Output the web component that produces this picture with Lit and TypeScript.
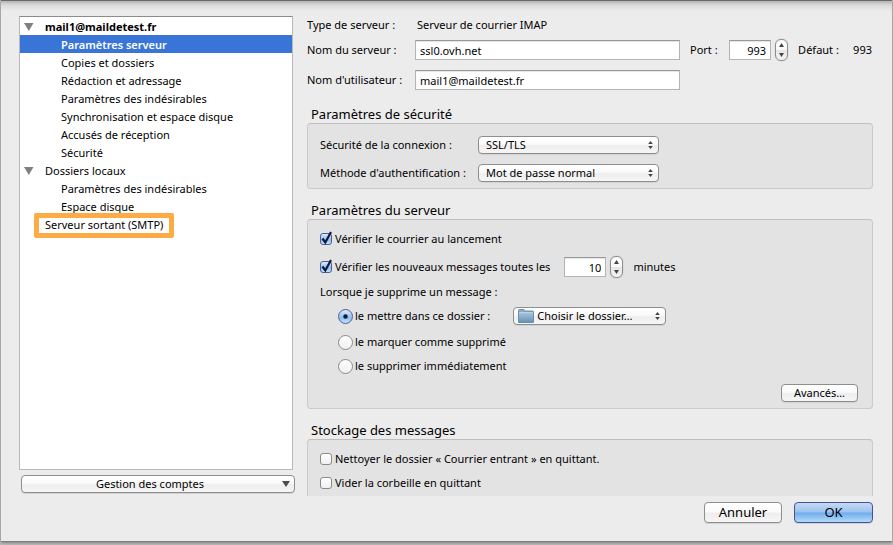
import { LitElement, html, css, nothing } from "lit";
import { customElement, property, state } from "lit/decorators.js";
import { classMap } from "lit/directives/class-map.js";

const controls = css`
  *, *::before, *::after { box-sizing: border-box; }
  button, input, select { font: inherit; color: inherit; margin: 0; }
  .push, .popup select {
    height: 18px;
    padding: 0 8px;
    border: 1px solid #8e8e8e;
    border-radius: 4px;
    background: linear-gradient(#ffffff, #fafafa 45%, #eeeeee 55%, #f6f6f6);
    box-shadow: 0 1px 0 #d2d2d2;
    line-height: 16px;
    white-space: nowrap;
  }
  .field {
    width: 100%;
    height: 20px;
    padding: 0 4px;
    border: 1px solid #b4b4b4;
    border-top-color: #989898;
    border-radius: 0;
    background: #fff;
    box-shadow: inset 0 1px 1px #e4e4e4;
    outline: none;
  }
`;

@customElement("pop-up")
class PopUp extends LitElement {
  @property({ type: Array }) options: string[] = [];
  @property() label = "";
  @property({ type: Boolean }) folder = false;

  static styles = [controls, css`
    :host { display: block; }
    .popup { display: grid; align-items: center; }
    .popup select {
      grid-area: 1 / 1;
      width: 100%;
      padding: 0 18px 0 7px;
      appearance: none;
      outline: none;
    }
    .popup.folder select { padding-left: 23px; }
    .arrows { grid-area: 1 / 1; justify-self: end; margin-right: 6px; pointer-events: none; }
    .icon { grid-area: 1 / 1; justify-self: start; margin-left: 5px; pointer-events: none; }
  `];

  render() {
    return html`
      <div class=${classMap({ popup: true, folder: this.folder })}>
        <select aria-label=${this.label}>
          ${this.options.map((o) => html`<option>${o}</option>`)}
        </select>
        ${this.folder ? html`
          <svg class="icon" width="16" height="14" viewBox="0 0 16 14" aria-hidden="true">
            <defs><linearGradient id="f" x1="0" y1="0" x2="0" y2="1">
              <stop offset="0" stop-color="#a3c3da"></stop><stop offset="1" stop-color="#6894b4"></stop>
            </linearGradient></defs>
            <path d="M.5 13.500V1.500Q.5.5 1.500.5H5.500Q6.500.5 6.500 1.500V2H14.500Q15.500 2 15.500 3V13.500Z" fill="#86abc6" stroke="#6a90ac"></path>
            <path d="M1 4H15V13H1Z" fill="url(#f)"></path>
            <path d="M1 3.500H15" stroke="#b9d3e5"></path>
          </svg>` : nothing}
        <svg class="arrows" width="5" height="8" viewBox="0 0 5 8" aria-hidden="true">
          <path d="M2.500 0 4.800 3H.2ZM2.500 8 .2 5H4.800Z" fill="#444"></path>
        </svg>
      </div>`;
  }
}

@customElement("number-stepper")
class NumberStepper extends LitElement {
  @property({ type: Number }) value = 0;
  @property() label = "";

  static styles = [controls, css`
    :host { display: flex; align-items: center; gap: 4px; }
    .field { width: 42px; text-align: right; }
    .stepper {
      display: flex;
      flex-direction: column;
      width: 13px;
      height: 22px;
      border: 1px solid #8e8e8e;
      border-radius: 6px;
      background: linear-gradient(#fff, #f8f8f8 48%, #e6e6e6 52%, #f4f4f4);
      box-shadow: 0 0 1px #999;
    }
    .step { flex: 1; display: grid; place-items: center; padding: 0; border: 0; background: none; }
    .step svg { display: block; }
  `];

  render() {
    return html`
      <input class="field" inputmode="numeric" aria-label=${this.label} .value=${String(this.value)}>
      <span class="stepper">
        <button class="step" aria-label="Augmenter" @click=${() => this.value++}>
          <svg width="5" height="4" viewBox="0 0 5 4"><path d="M2.500 0 5 4H0Z" fill="#444"></path></svg>
        </button>
        <button class="step" aria-label="Diminuer" @click=${() => this.value--}>
          <svg width="5" height="4" viewBox="0 0 5 4"><path d="M0 0H5L2.500 4Z" fill="#444"></path></svg>
        </button>
      </span>`;
  }
}

interface Entry { text: string; kind: "account" | "child" | "root"; bold?: boolean; marked?: boolean; }

const ENTRIES: Entry[] = [
  { text: "mail1@maildetest.fr", kind: "account", bold: true },
  { text: "Paramètres serveur", kind: "child" },
  { text: "Copies et dossiers", kind: "child" },
  { text: "Rédaction et adressage", kind: "child" },
  { text: "Paramètres des indésirables", kind: "child" },
  { text: "Synchronisation et espace disque", kind: "child" },
  { text: "Accusés de réception", kind: "child" },
  { text: "Sécurité", kind: "child" },
  { text: "Dossiers locaux", kind: "account" },
  { text: "Paramètres des indésirables", kind: "child" },
  { text: "Espace disque", kind: "child" },
  { text: "Serveur sortant (SMTP)", kind: "root", marked: true },
];

@customElement("app-root")
class AppRoot extends LitElement {
  @state() private selected = 1;

  static styles = [controls, css`
    :host {
      display: block;
      height: 100vh;
      min-height: 400px;
      padding: 0 1px 3px;
      background: #bdbdbd;
      color: #000;
      font: 11px/18px "Noto Sans", "Open Sans", sans-serif;
      box-sizing: border-box;
      overflow: hidden;
    }
    .sheet {
      display: flex;
      flex-direction: column;
      height: 100%;
      padding: 15px 19px 18px 18px;
      border-top: 1px solid #6a666a;
      border-bottom: 1px solid #7c7c7c;
      background: linear-gradient(#b4b2b4, #dadada 4px, #ececec 10px);
      box-shadow: 0 1px 3px #808080;
    }
    .columns {
      flex: 1;
      min-height: 0;
      display: grid;
      grid-template-columns: 274px minmax(0, 1fr);
      gap: 14px;
    }
    .side { display: flex; flex-direction: column; min-height: 0; padding-bottom: 3px; }
    .tree {
      flex: 1;
      margin: 0 0 5px;
      padding: 0;
      list-style: none;
      border: 1px solid #b8b8b8;
      border-top-color: #8c8c8c;
      background: #fff;
    }
    .entry {
      display: flex;
      align-items: center;
      width: 100%;
      height: 18px;
      padding: 2px 0 0 25px;
      border: 0;
      background: none;
      text-align: left;
      white-space: nowrap;
    }
    .entry.child { padding-left: 41px; }
    .entry.account { padding-left: 4px; gap: 11px; }
    .entry.bold { font-weight: 700; }
    .entry.selected { background: #3875d7; color: #fff; font-weight: 600; }
    .marked .name { position: relative; }
    .marked .name::after {
      content: "";
      position: absolute;
      inset: -3px -11px -4px;
      border: 5px solid #ffab45;
      border-radius: 2px;
    }
    .manage { display: flex; align-items: center; margin: 0 -2px 0 2px; }
    .manage span { flex: 1; padding-right: 12px; text-align: center; }
    .manage svg { margin-right: -4px; }

    .panel { min-height: 0; overflow: hidden; }
    .server {
      display: grid;
      grid-template-columns: 108px minmax(0, 1fr) 193px;
      align-items: center;
      margin-bottom: 5px;
    }
    .server > * { margin-bottom: 10px; }
    .server > .type { margin-bottom: 6px; }
    .type.value { grid-column: 2 / 4; padding-left: 2px; }
    .port { display: flex; align-items: center; height: 20px; padding: 0 1px 0 10px; }
    .port .caption { flex: 1; }
    .port .default { width: 55px; margin-left: 10px; }
    .group { margin: 0 0 12px; }
    .title { margin: 0; padding: 0 4px; font-size: 13px; line-height: 18px; font-weight: 400; }
    .box {
      padding: 10px 14px 6px 12px;
      border: 1px solid #cacaca;
      border-top-color: #bebebe;
      border-radius: 4px;
      background: #e3e3e3;
    }
    .security {
      display: grid;
      grid-template-columns: 152px 181px;
      gap: 10px 6px;
      padding-top: 12px;
      white-space: nowrap;
    }
    .stack { display: flex; flex-direction: column; gap: 6px; }
    .line { display: flex; align-items: center; height: 18px; white-space: nowrap; }
    .later { height: 20px; margin-top: 3px; }
    .indent { padding-left: 18px; }
    .spaced { margin-top: 2px; }
    .option { display: flex; align-items: center; gap: 3px; }
    .option.radio { gap: 2px; }
    .tick { display: grid; place-items: center; }
    .tick > * { grid-area: 1 / 1; }
    .tick svg { pointer-events: none; display: none; overflow: visible; }
    .tick input:checked + svg { display: block; }
    .tick input {
      appearance: none;
      width: 12px;
      height: 12px;
      border: 1px solid #8a8a8a;
      border-radius: 3px;
      background: linear-gradient(#fff, #f0f0f0);
    }
    .tick input:checked { border-color: #4a5f96; background: linear-gradient(#dcebfa, #8fbdf0 60%, #c2e6fc); }
    .tick input[type="radio"] { width: 15px; height: 15px; border-radius: 50%; }
    .after { margin-left: 10px; }
    .every { margin-left: 14px; }
    .folder { width: 153px; margin-left: 23px; }
    .end { justify-content: flex-end; margin-top: 3px; }
    .advanced { width: 77px; text-align: center; }
    .actions { display: flex; justify-content: flex-end; gap: 12px; padding-top: 6px; font-size: 13px; }
    .actions .push { width: 78px; height: 21px; line-height: 19px; }
    .actions .ok {
      width: 79px;
      border-color: #4a4f98;
      background: linear-gradient(#c4daf4, #9cc2f0 48%, #70abec 52%, #b0dcf8);
    }
  `];

  private check(label: string, checked: boolean) {
    return html`
      <label class="option">
        <span class="tick">
          <input type="checkbox" .checked=${checked}>
          <svg width="12" height="12" viewBox="0 0 12 12" aria-hidden="true">
            <path d="M2.500 5.500 5.300 9.500 11 -1" fill="none" stroke="#10183c" stroke-width="2.200"></path>
          </svg>
        </span>
        <span>${label}</span>
      </label>`;
  }

  private radio(label: string, checked: boolean) {
    return html`
      <label class="option radio">
        <span class="tick">
          <input type="radio" name="delete" .checked=${checked}>
          <svg width="5" height="5" viewBox="0 0 5 5" aria-hidden="true">
            <circle cx="2.500" cy="2.500" r="2.200" fill="#10183c"></circle>
          </svg>
        </span>
        <span>${label}</span>
      </label>`;
  }

  private entry(e: Entry, i: number) {
    const classes = { entry: true, [e.kind]: true, bold: !!e.bold, marked: !!e.marked, selected: i === this.selected };
    return html`
      <li>
        <button class=${classMap(classes)} @click=${() => (this.selected = i)}>
          ${e.kind === "account" ? html`
            <svg width="10" height="8" viewBox="0 0 10 8" aria-hidden="true"><path d="M0 0H9.500L4.800 8Z" fill="#808080"></path></svg>` : nothing}
          <span class="name">${e.text}</span>
        </button>
      </li>`;
  }

  render() {
    return html`
      <main class="sheet">
        <div class="columns">
          <nav class="side" aria-label="Comptes">
            <ul class="tree">${ENTRIES.map((e, i) => this.entry(e, i))}</ul>
            <button class="push manage">
              <span>Gestion des comptes</span>
              <svg width="8" height="6" viewBox="0 0 8 6" aria-hidden="true"><path d="M0 0H8L4 6Z" fill="#4c4c4c"></path></svg>
            </button>
          </nav>
          <div class="panel">
            <div class="server">
              <span class="type">Type de serveur :</span>
              <span class="type value">Serveur de courrier IMAP</span>
              <label for="host">Nom du serveur :</label>
              <input class="field" id="host" value="ssl0.ovh.net">
              <div class="port">
                <span class="caption">Port :</span>
                <number-stepper label="Port" .value=${993}></number-stepper>
                <span class="default">Défaut :</span>
                <span>993</span>
              </div>
              <label for="user">Nom d'utilisateur :</label>
              <input class="field" id="user" value="mail1@maildetest.fr">
            </div>

            <section class="group">
              <h2 class="title">Paramètres de sécurité</h2>
              <div class="box security">
                <span>Sécurité de la connexion :</span>
                <pop-up label="Sécurité de la connexion" .options=${["SSL/TLS", "STARTTLS", "Aucune"]}></pop-up>
                <span>Méthode d'authentification :</span>
                <pop-up label="Méthode d'authentification" .options=${["Mot de passe normal", "Mot de passe chiffré"]}></pop-up>
              </div>
            </section>

            <section class="group">
              <h2 class="title">Paramètres du serveur</h2>
              <div class="box stack">
                <div class="line">${this.check("Vérifier le courrier au lancement", true)}</div>
                <div class="line later">
                  ${this.check("Vérifier les nouveaux messages toutes les", true)}
                  <number-stepper class="every" label="Intervalle en minutes" .value=${10}></number-stepper>
                  <span class="after">minutes</span>
                </div>
                <div class="line">Lorsque je supprime un message :</div>
                <div class="line indent">
                  ${this.radio("le mettre dans ce dossier :", true)}
                  <pop-up class="folder" folder label="Dossier" .options=${["Choisir le dossier…"]}></pop-up>
                </div>
                <div class="line indent spaced">${this.radio("le marquer comme supprimé", false)}</div>
                <div class="line indent">${this.radio("le supprimer immédiatement", false)}</div>
                <div class="line end"><button class="push advanced">Avancés…</button></div>
              </div>
            </section>

            <section class="group">
              <h2 class="title">Stockage des messages</h2>
              <div class="box stack">
                <div class="line">${this.check("Nettoyer le dossier « Courrier entrant » en quittant.", false)}</div>
                <div class="line">${this.check("Vider la corbeille en quittant", false)}</div>
              </div>
            </section>
          </div>
        </div>
        <footer class="actions">
          <button class="push">Annuler</button>
          <button class="push ok">OK</button>
        </footer>
      </main>`;
  }
}
